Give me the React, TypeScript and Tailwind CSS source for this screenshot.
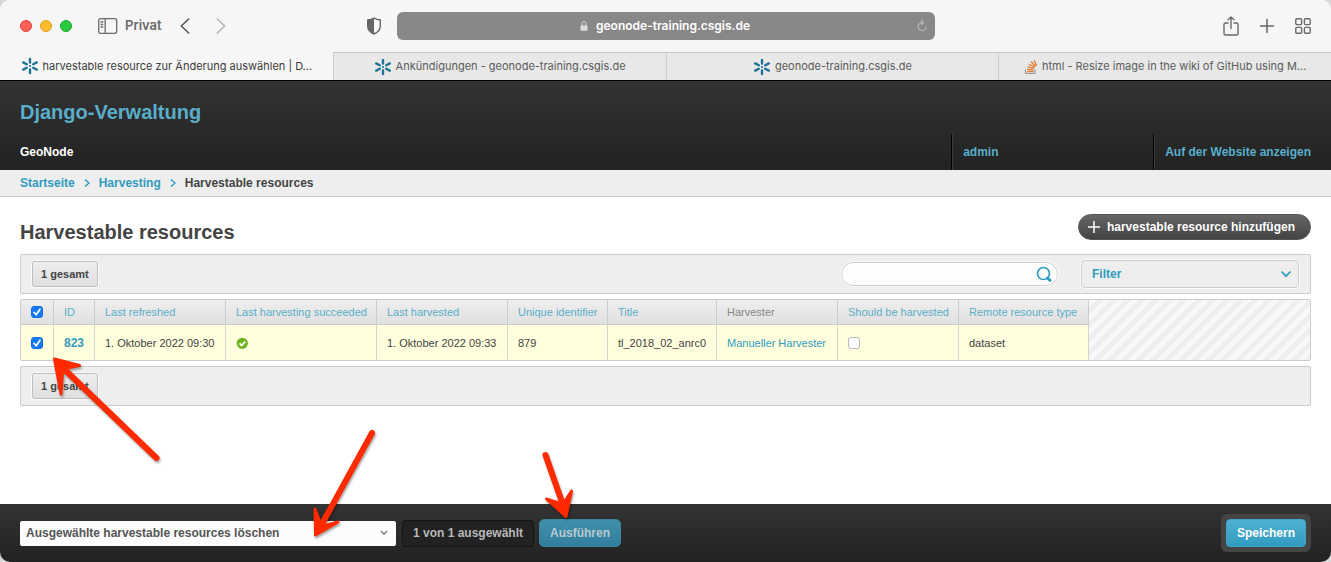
import React from "react";

function GeoNodeIcon() {
  return (
    <svg viewBox="0 0 18 18" className="h-[18px] w-[18px] shrink-0" aria-hidden="true">
      <g stroke="#1f7397" strokeWidth="2.4" strokeLinecap="round">
        <path d="M9 2v3.500M9 12.500V16" />
        <path d="M2.200 5.400l3.600 1.900M12.200 10.700l3.600 1.900" />
        <path d="M2.200 12.600l3.600-1.900M12.200 7.300l3.600-1.900" />
      </g>
      <circle cx="9" cy="9" r="1.1" fill="#1f7397" />
    </svg>
  );
}

function StackOverflowIcon() {
  return (
    <svg viewBox="0 0 14 16" className="h-4 w-[14px] shrink-0" fill="none" aria-hidden="true">
      <path d="M1.5 10.5v4h9.5v-4" stroke="#9a9a9a" strokeWidth="1.2" />
      <path
        d="M3 12.6h6.600M3.100 10.400l6.500.8M3.600 7.900l6.300 1.800M4.900 5.200l5.700 3.200M7.100 2.800l4.500 4.700M10 1.200l2.700 5.400"
        stroke="#e0792f"
        strokeWidth="1.3"
      />
    </svg>
  );
}

function Tab({ active = false, icon, children }: { active?: boolean; icon: React.ReactNode; children: string }) {
  return (
    <a
      href="#"
      className={
        active
          ? "flex min-w-0 items-center justify-center gap-1 bg-[#f6f6f6] px-5 text-[11px] font-normal text-[#3c3c3c]"
          : "flex min-w-0 items-center justify-center gap-1 border-t border-l border-t-[#c4c4c4] border-l-[#cfcfcf] bg-[#e8e8e8] px-5 text-[11px] font-normal text-[#5c5c5c]"
      }
    >
      {icon}
      <span className="whitespace-nowrap">{children}</span>
    </a>
  );
}

function BrowserChrome() {
  return (
    <header className="border-b border-black bg-[#f6f6f6] font-['Inter',sans-serif]">
      <div className="flex h-[52px] items-center pr-5 pl-5">
        <div className="flex w-[377px] shrink-0 items-center">
          <div className="flex gap-2">
            <span className="size-3 rounded-full border border-[#e0443e] bg-[#ff5f57]" />
            <span className="size-3 rounded-full border border-[#dea123] bg-[#febc2e]" />
            <span className="size-3 rounded-full border border-[#1aab29] bg-[#28c840]" />
          </div>
          <button type="button" className="ml-[26px] flex items-center gap-[7px] text-[13px] font-semibold text-[#6a6a6a]">
            <svg viewBox="0 0 20 16" className="h-4 w-5" fill="none" stroke="#6a6a6a" strokeWidth="1.3" aria-hidden="true">
              <rect x="0.7" y="0.7" width="18" height="14.6" rx="2" />
              <path d="M7.2 1v14M2.6 4h2.6M2.6 6.5h2.6M2.6 9h2.6" />
            </svg>
            Privat
          </button>
          <button type="button" aria-label="Zurück" className="ml-[18px]">
            <svg viewBox="0 0 10 16" className="h-4 w-[10px]" fill="none" stroke="#555" strokeWidth="1.6" strokeLinecap="round" strokeLinejoin="round" aria-hidden="true">
              <path d="M8.7 1L1.3 8l7.4 7" />
            </svg>
          </button>
          <button type="button" aria-label="Vorwärts" className="ml-[26px]">
            <svg viewBox="0 0 10 16" className="h-4 w-[10px]" fill="none" stroke="#b4b4b4" strokeWidth="1.6" strokeLinecap="round" strokeLinejoin="round" aria-hidden="true">
              <path d="M1.3 1l7.4 7-7.4 7" />
            </svg>
          </button>
          <button type="button" aria-label="Datenschutzbericht" className="mr-[15px] ml-auto">
            <svg viewBox="0 0 16 18" className="h-[18px] w-4" aria-hidden="true">
              <path d="M8 1C6.200 2.300 3.700 2.900 1.700 3v6c0 4 2.800 6.600 6.300 8 3.500-1.400 6.300-4 6.300-8V3C12.300 2.900 9.800 2.300 8 1z" fill="none" stroke="#666" strokeWidth="1.4" />
              <path d="M8 1C6.200 2.300 3.700 2.900 1.700 3v6c0 4 2.800 6.600 6.300 8z" fill="#666" />
            </svg>
          </button>
        </div>
        <div className="flex h-7 w-[538px] shrink items-center justify-center rounded-md bg-[#888] pr-2 pl-4">
          <div className="flex flex-1 items-center justify-center gap-2 text-xs font-semibold text-white">
            <svg viewBox="0 0 8 10" className="h-[10px] w-2" aria-hidden="true">
              <rect x="0.5" y="4.400" width="7" height="5.400" rx="0.800" fill="#ddd" />
              <path d="M2 4.600V2.700a2 2 0 014 0v1.900" fill="none" stroke="#ddd" strokeWidth="1" />
            </svg>
            geonode-training.csgis.de
          </div>
          <button type="button" aria-label="Neu laden">
            <svg viewBox="0 0 10 12" className="h-3 w-[10px]" fill="none" stroke="#bbb" strokeWidth="1.100" strokeLinecap="round" aria-hidden="true">
              <path d="M5.500 2.600a4 4 0 103.700 4.200M4.400 0.700l2.200 1.900-2.200 2" />
            </svg>
          </button>
        </div>
        <div className="ml-auto flex items-center gap-[20px]">
          <button type="button" aria-label="Teilen">
            <svg viewBox="0 0 16 20" className="h-5 w-4" fill="none" stroke="#6a6a6a" strokeWidth="1.400" strokeLinecap="round" strokeLinejoin="round" aria-hidden="true">
              <path d="M5 7H2.500A1.500 1.500 0 001 8.500v9A1.500 1.500 0 002.500 19h11a1.500 1.500 0 001.500-1.500v-9A1.500 1.500 0 0013.500 7H11M8 12.500V1M5 3.800L8 1l3 2.800" />
            </svg>
          </button>
          <button type="button" aria-label="Neuer Tab">
            <svg viewBox="0 0 16 16" className="size-4" fill="none" stroke="#666" strokeWidth="1.500" strokeLinecap="round" aria-hidden="true">
              <path d="M8 1.500v13M1.500 8h13" />
            </svg>
          </button>
          <button type="button" aria-label="Tabübersicht">
            <svg viewBox="0 0 16 16" className="size-4" fill="none" stroke="#6a6a6a" strokeWidth="1.400" aria-hidden="true">
              <rect x="0.800" y="0.800" width="5.800" height="5.800" rx="1" />
              <rect x="9.400" y="0.800" width="5.800" height="5.800" rx="1" />
              <rect x="0.800" y="9.400" width="5.800" height="5.800" rx="1" />
              <rect x="9.400" y="9.400" width="5.800" height="5.800" rx="1" />
            </svg>
          </button>
        </div>
      </div>
      <nav className="grid h-7 grid-cols-4">
        <Tab active icon={<GeoNodeIcon />}>harvestable resource zur Änderung auswählen | D...</Tab>
        <Tab icon={<GeoNodeIcon />}>Ankündigungen - geonode-training.csgis.de</Tab>
        <Tab icon={<GeoNodeIcon />}>geonode-training.csgis.de</Tab>
        <Tab icon={<StackOverflowIcon />}>html - Resize image in the wiki of GitHub using M...</Tab>
      </nav>
    </header>
  );
}

function Crumb() {
  return (
    <svg viewBox="0 0 6 8" className="h-2 w-[6px]" fill="none" stroke="#309bbf" strokeWidth="1.500" aria-hidden="true">
      <path d="M1 0.500L5 4 1 7.500" />
    </svg>
  );
}

function Total() {
  return (
    <span className="rounded-xs border border-[#c0c0c0] bg-linear-to-b from-[#eee] to-[#dfdfdf] px-2 py-1 text-[11px] leading-4 font-bold text-[#444] outline outline-[#fafafa]">
      1 gesamt
    </span>
  );
}

const panel = "flex h-10 items-center rounded-xs border border-[#ccc] bg-[#eee] pr-[11px] pl-[11px]";
const box = "block size-3 appearance-none rounded-[3px]";

function CheckBox({ label, checked }: { label: string; checked: boolean }) {
  return (
    <span className="grid size-3">
      <input
        type="checkbox"
        aria-label={label}
        defaultChecked={checked}
        className={`peer col-start-1 row-start-1 border border-[#b8b8b8] bg-white checked:border-[#0a6fe8] checked:bg-[#1479f6] ${box}`}
      />
      <svg viewBox="0 0 12 12" className="pointer-events-none col-start-1 row-start-1 hidden size-3 peer-checked:block" fill="none" stroke="#fff" strokeWidth="1.700" strokeLinecap="round" strokeLinejoin="round" aria-hidden="true">
        <path d="M3 6.300l2.200 2.500L9 3.200" />
      </svg>
    </span>
  );
}

const columns = [
  { name: "ID", width: "w-[41px]" },
  { name: "Last refreshed", width: "w-[131px]" },
  { name: "Last harvesting succeeded", width: "w-[151px]" },
  { name: "Last harvested", width: "w-[131px]" },
  { name: "Unique identifier", width: "w-[100px]" },
  { name: "Title", width: "w-[109px]" },
  { name: "Harvester", width: "w-[121px]" },
  { name: "Should be harvested", width: "w-[121px]" },
  { name: "Remote resource type", width: "w-[130px]" },
];

const cell = "border-r border-[#d6d6c8] bg-[#ffffdd] pl-[10px] whitespace-nowrap";

function Results() {
  return (
    <div className="flex overflow-hidden rounded-xs border border-[#ccc]">
      <table className="w-[1068px] table-fixed border-separate border-spacing-0 text-left text-[11px] leading-4 font-normal text-[#444]">
        <thead>
          <tr className="h-[25px]">
            <th className="w-[33px] border-r border-b border-[#ccc] bg-linear-to-b from-[#eee] to-[#e0e0e0] pl-[10px]">
              <CheckBox label="Alle auswählen" checked />
            </th>
            {columns.map((c) => (
              <th key={c.name} className={`border-r border-b border-[#ccc] bg-linear-to-b from-[#eee] to-[#e0e0e0] pl-[10px] font-normal whitespace-nowrap ${c.width}`}>
                {c.name === "Harvester" ? <span className="text-[#888]">{c.name}</span> : <a href="#" className="text-[#59aeca]">{c.name}</a>}
              </th>
            ))}
          </tr>
        </thead>
        <tbody>
          <tr className="h-[35px]">
            <td className={cell}><CheckBox label="823 auswählen" checked /></td>
            <th scope="row" className={cell}><a href="#" className="text-xs font-bold text-[#309bbf]">823</a></th>
            <td className={cell}>1. Oktober 2022 09:30</td>
            <td className={cell}>
              <svg viewBox="0 0 12 12" className="size-3" role="img" aria-label="Ja">
                <circle cx="6.300" cy="6.300" r="5.600" fill="#70b422" />
                <path d="M3.600 6.300l2 2.100 3.600-3.800" fill="none" stroke="#fff" strokeWidth="1.800" />
              </svg>
            </td>
            <td className={cell}>1. Oktober 2022 09:33</td>
            <td className={cell}>879</td>
            <td className={cell}>tl_2018_02_anrc0</td>
            <td className={cell}><a href="#" className="text-[#309bbf]">Manueller Harvester</a></td>
            <td className={cell}><CheckBox label="Should be harvested" checked={false} /></td>
            <td className={cell}>dataset</td>
          </tr>
        </tbody>
      </table>
      <div className="flex-1 bg-[repeating-linear-gradient(135deg,#f8f8f8_0,#f8f8f8_5px,#eee_5px,#eee_10px)]" />
    </div>
  );
}

function Arrows() {
  return (
    <svg viewBox="0 0 640 240" className="pointer-events-none absolute top-[340px] left-0 h-[240px] w-[640px] drop-shadow-[1px_2px_1px_rgba(0,0,0,0.35)]" fill="#ff2a00" stroke="#ff2a00" strokeLinecap="round" strokeLinejoin="round" aria-hidden="true">
      <path d="M156.500 118L64 29" strokeWidth="6" fill="none" />
      <path d="M54.500 19L79.500 25.500 67 28 62.500 32 61 54z" strokeWidth="3" />
      <path d="M372 93L322 184" strokeWidth="6" fill="none" />
      <path d="M315.500 195L315 169 320 182 325 185.500 338 182z" strokeWidth="3" />
      <path d="M545.500 115L563 165" strokeWidth="6" fill="none" />
      <path d="M566 176.500L546.500 159 559 163 565 161 571.500 151z" strokeWidth="3" />
    </svg>
  );
}

export default function App() {
  return (
    <div className="bg-[#d8d8d8]">
      <div className="relative flex min-h-screen flex-col overflow-hidden rounded-[10px] bg-white font-['Liberation_Sans',Arial,sans-serif] text-xs font-bold">
        <BrowserChrome />
        <div className="flex h-[89px] flex-col justify-between bg-linear-to-b from-[#333] to-[#222] pl-5">
          <a href="#" className="pt-[19px] text-xl leading-6 text-[#59aeca]">Django-Verwaltung</a>
          <div className="flex h-9 items-center">
            <span className="flex-1 text-white">GeoNode</span>
            <a href="#" className="flex h-full w-[202px] items-center border-l border-black pl-[11px] text-[#59aeca] shadow-[inset_1px_0_#3c3c3c]">admin</a>
            <a href="#" className="flex h-full items-center border-l border-black pr-5 pl-[11px] text-[#59aeca] shadow-[inset_1px_0_#3c3c3c]">Auf der Website anzeigen</a>
          </div>
        </div>
        <nav className="flex h-[27px] items-center gap-[9px] border-b border-[#ccc] bg-[#eee] px-5 text-[#309bbf]">
          <a href="#">Startseite</a>
          <Crumb />
          <a href="#">Harvesting</a>
          <Crumb />
          <span className="text-[#444]">Harvestable resources</span>
        </nav>
        <main className="flex flex-1 flex-col gap-[5px] px-5 pt-[17px]">
          <div className="flex items-start justify-between pb-[5px]">
            <h1 className="pt-[6px] text-xl leading-6 text-[#444]">Harvestable resources</h1>
            <a href="#" className="flex h-[26px] items-center gap-[7px] rounded-full border border-[#555] bg-linear-to-b from-[#666] to-[#444] pr-[15px] pl-[9px] text-white">
              <svg viewBox="0 0 12 12" className="size-3" stroke="#fff" strokeWidth="1.500" aria-hidden="true"><path d="M6 0v12M0 6h12" /></svg>
              harvestable resource hinzufügen
            </a>
          </div>
          <div className={panel}>
            <Total />
            <div className="ml-auto flex h-6 w-[217px] items-center rounded-full border border-[#ccc] bg-[#fdfdfd] pr-[5px] pl-3 outline outline-[#fafafa]">
              <input type="search" aria-label="Suche" className="min-w-0 flex-1 bg-transparent outline-none" />
              <button type="button" aria-label="Suchen">
                <svg viewBox="0 0 16 16" className="size-4" fill="none" stroke="#309bbf" aria-hidden="true">
                  <circle cx="7.500" cy="7.500" r="6" strokeWidth="1.700" />
                  <path d="M11.500 12l2.500 2.300" strokeWidth="3" strokeLinecap="round" />
                </svg>
              </button>
            </div>
            <button type="button" className="ml-[23px] flex h-7 w-[218px] items-center justify-between rounded-[4px] border border-[#ccc] bg-[#eee] pr-[6px] pl-[10px] text-[#309bbf] outline outline-[#fafafa]">
              Filter
              <svg viewBox="0 0 12 8" className="h-2 w-3" fill="none" stroke="#309bbf" strokeWidth="1.700" aria-hidden="true"><path d="M1.500 1.500L6 6.200l4.500-4.700" /></svg>
            </button>
          </div>
          <Results />
          <div className={panel}><Total /></div>
        </main>
        <footer className="flex h-[58px] items-center bg-linear-to-b from-[#333] to-[#222] px-5">
          <div className="grid w-[376px] items-center">
            <select aria-label="Aktion" className="col-start-1 row-start-1 h-[25px] appearance-none rounded-xs bg-[#fcfcfc] pl-[6px] text-[#555]">
              <option>Ausgewählte harvestable resources löschen</option>
            </select>
            <svg viewBox="0 0 8 6" className="pointer-events-none col-start-1 row-start-1 mr-2 h-[6px] w-2 justify-self-end" fill="none" stroke="#666" strokeWidth="1.200" aria-hidden="true"><path d="M1 1l3 3.200L7 1" /></svg>
          </div>
          <span className="ml-[6px] flex h-[27px] items-center rounded-[3px] border border-[#151515] bg-[#222] px-[10px] text-[#b8b8b8]">1 von 1 ausgewählt</span>
          <button type="button" className="ml-[5px] h-7 rounded-[5px] border border-[#3a87a1] bg-linear-to-b from-[#408fab] to-[#317f9c] px-[10px] text-[#b9c9cf]">Ausführen</button>
          <div className="ml-auto rounded-[6px] bg-[#444] p-[5px]">
            <button type="button" className="h-7 rounded-[4px] border border-[#3ba6ca] bg-linear-to-b from-[#4fb1d3] to-[#309bbf] px-[10px] text-white">Speichern</button>
          </div>
        </footer>
        <Arrows />
      </div>
    </div>
  );
}
